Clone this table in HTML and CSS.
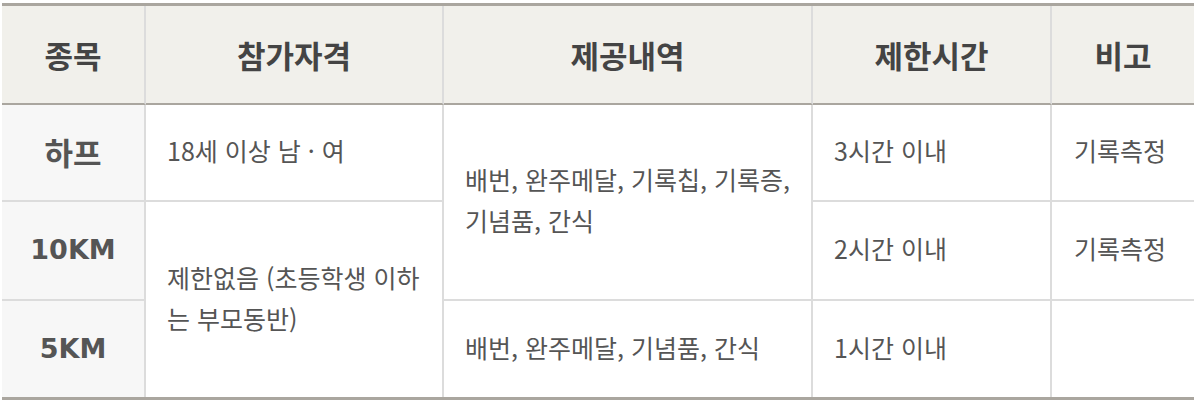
FILE: index.html
```html
<!DOCTYPE html>
<html lang="ko">
<head>
<meta charset="utf-8">
<link rel="stylesheet" href="styles.css">
</head>
<body>
<div class="wrap">
<table class="race">
  <colgroup>
    <col class="c1"><col class="c2"><col class="c3"><col class="c4"><col class="c5">
  </colgroup>
  <thead>
    <tr class="head">
      <th>종목</th><th>참가자격</th><th>제공내역</th><th>제한시간</th><th class="last">비고</th>
    </tr>
  </thead>
  <tbody>
    <tr class="r1">
      <th class="event">하프</th>
      <td class="qual">18세 이상 남 · 여</td>
      <td class="gift" rowspan="2">배번, 완주메달, 기록칩, 기록증, 기념품, 간식</td>
      <td>3시간 이내</td>
      <td class="last center">기록측정</td>
    </tr>
    <tr class="r2">
      <th class="event km">10KM</th>
      <td rowspan="2" class="qual end">제한없음 (초등학생 이하는 부모동반)</td>
      <td>2시간 이내</td>
      <td class="last center">기록측정</td>
    </tr>
    <tr class="r3">
      <th class="event km end">5KM</th>
      <td class="gift end">배번, 완주메달, 기념품, 간식</td>
      <td class="end">1시간 이내</td>
      <td class="last end center"></td>
    </tr>
  </tbody>
</table>
</div>
</body>
</html>
```

FILE: styles.css
```css
html, body {
  margin: 0;
  padding: 0;
  background: #fff;
}
.wrap {
  padding: 3px 8px 0 2px;
}
.race {
  width: 1192px;
  table-layout: fixed;
  border-collapse: separate;
  border-spacing: 0;
  border-top: 3px solid #aaa69f;
  border-bottom: 3px solid #aaa69f;
  font-family: "Noto Sans CJK KR", "Noto Sans", sans-serif;
}
.c1 { width: 144px; }
.c2 { width: 298px; }
.c3 { width: 369px; }
.c4 { width: 239px; }
.c5 { width: 142px; }

th, td {
  border-right: 2px solid #dcdcdc;
  border-bottom: 2px solid #dcdcdc;
  padding: 0 18px 4px 21px;
  vertical-align: middle;
}
.last { border-right: none; }
.end { border-bottom: none; }

.head th {
  height: 99px;
  box-sizing: border-box;
  background: #f1f0eb;
  border-bottom: 2px solid #aaa69f;
  font-size: 31px;
  font-weight: 700;
  color: #444;
  text-align: center;
  padding: 0;
}
.r1 { height: 97px; }
.r2 { height: 99px; }
.r3 { height: 96px; }

.event {
  background: #f7f7f7;
  font-size: 31px;
  font-weight: 700;
  color: #555;
  text-align: center;
  padding: 0 0 2px 0;
}
.event.km {
  font-family: "DejaVu Sans", "Noto Sans CJK KR", sans-serif;
  font-size: 27px;
}
td {
  font-size: 25px;
  line-height: 41px;
  color: #555;
  text-align: left;
}
td.qual {
  padding-right: 14px;
}
td.gift {
  padding-right: 12px;
}
td.center {
  text-align: center;
  padding: 0 6px 4px 0;
}
```
